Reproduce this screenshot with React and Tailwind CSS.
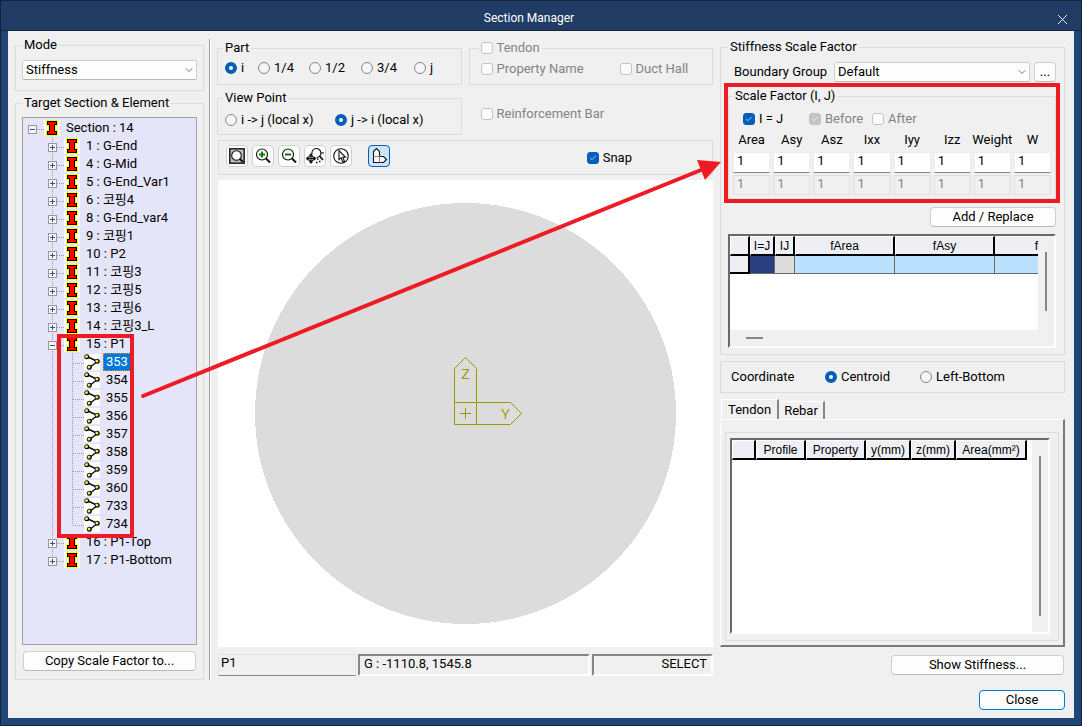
import { ChevronDown, Check, X } from 'lucide-react'

const sections = [
  '1 : G-End',
  '4 : G-Mid',
  '5 : G-End_Var1',
  '6 : 코핑4',
  '8 : G-End_var4',
  '9 : 코핑1',
  '10 : P2',
  '11 : 코핑3',
  '12 : 코핑5',
  '13 : 코핑6',
  '14 : 코핑3_L',
  '15 : P1',
  '16 : P1-Top',
  '17 : P1-Bottom',
]

const elements = ['353', '354', '355', '356', '357', '358', '359', '360', '733', '734']

const factors = ['Area', 'Asy', 'Asz', 'Ixx', 'Iyy', 'Izz', 'Weight', 'W']

function Group({ title, className = '', children }) {
  return (
    <fieldset className={`min-w-0 border border-[#dcdcdc] ${className}`}>
      <legend className="h-4 px-0.5 leading-4">{title}</legend>
      {children}
    </fieldset>
  )
}

function Radio({ label, name, defaultChecked }) {
  return (
    <label className="flex h-4 items-center gap-1 whitespace-nowrap">
      <input
        type="radio"
        name={name}
        defaultChecked={defaultChecked}
        className="h-3 w-3 shrink-0 appearance-none rounded-full border border-[#868686] bg-[#f6f6f6] checked:border-4 checked:border-[#005fb8] checked:bg-white"
      />
      {label}
    </label>
  )
}

function Checkbox({ label, defaultChecked, disabled }) {
  return (
    <label
      className={`flex h-4 items-center gap-1 whitespace-nowrap ${disabled ? 'text-[#838383]' : ''}`}
    >
      <span className="relative h-3 w-3 shrink-0">
        <input
          type="checkbox"
          defaultChecked={defaultChecked}
          disabled={disabled}
          className="block h-3 w-3 appearance-none rounded-[3px] border border-[#c3c3c3] bg-[#fbfbfb] checked:border-[#005fb8] checked:bg-[#005fb8] checked:disabled:border-[#c3c3c3] checked:disabled:bg-[#c3c3c3]"
        />
        {defaultChecked && (
          <Check size={8} className="pointer-events-none absolute top-0.5 left-0.5 text-white" />
        )}
      </span>
      {label}
    </label>
  )
}

function Select({ id, label, value, className = '' }) {
  return (
    <div className={`relative ${className}`}>
      <select
        id={id}
        aria-label={label}
        className="block h-5 w-full appearance-none rounded-xs border border-[#cfcfcf] border-b-[#b5b5b5] bg-[#fdfdfd] px-[3px] leading-4"
      >
        <option>{value}</option>
      </select>
      <ChevronDown
        size={12}
        strokeWidth={2}
        className="pointer-events-none absolute top-1 right-0.5 text-[#777]"
      />
    </div>
  )
}

function Button({ className = '', children }) {
  return (
    <button
      type="button"
      className={`h-5 rounded border border-[#cfcfcf] border-b-[#b8b8b8] bg-[#fdfdfd] text-center leading-4 ${className}`}
    >
      {children}
    </button>
  )
}

function Guide({ top = true, bottom = true, branch = true }) {
  return (
    <svg width="16" height="18" className="shrink-0" shapeRendering="crispEdges" aria-hidden="true">
      <g stroke="#9a9aa5" strokeDasharray="1 1">
        {top && <path d="M4.5 0V10" />}
        {bottom && <path d="M4.5 10V18" />}
        {branch && <path d="M5 10.5H16" />}
      </g>
    </svg>
  )
}

function Expander({ open, top = true, bottom = true }) {
  return (
    <button type="button" aria-label={open ? 'Collapse' : 'Expand'} className="relative shrink-0">
      <Guide top={top} bottom={bottom} />
      <svg width="9" height="9" className="absolute top-1.5 left-0" shapeRendering="crispEdges">
        <rect x=".5" y=".5" width="8" height="8" rx="1" fill="#f5f5f8" stroke="#979797" />
        <path d={open ? 'M2 4.5H7' : 'M2 4.5H7M4.5 2V7'} stroke="#34509c" />
      </svg>
    </button>
  )
}

function SectionIcon() {
  return (
    <svg width="16" height="16" className="shrink-0" shapeRendering="crispEdges" aria-hidden="true">
      <rect width="16" height="16" fill="#fff" />
      <path d="M2 0H14V6H12V10H14V16H2V10H4V6H2Z" fill="#ff0" />
      <path d="M3 1H13V5H11V11H13V15H3V11H5V5H3Z" fill="#000" />
      <path d="M4 2H12V4H10V12H12V14H4V12H6V4H4Z" fill="#f00" />
    </svg>
  )
}

function ElementIcon() {
  return (
    <svg width="16" height="16" className="shrink-0" aria-hidden="true">
      <rect width="16" height="16" fill="#fff" />
      <path d="M3 2.5L13.5 7.5L5.5 13.5" fill="none" stroke="#111" strokeWidth="1.5" />
      <g fill="#000">
        <circle cx="2.8" cy="2.8" r="2.5" />
        <circle cx="13.2" cy="7.3" r="2.5" />
        <circle cx="5.3" cy="13.2" r="2.5" />
      </g>
      <g fill="#e8e850">
        <circle cx="2.5" cy="2.5" r="1.5" />
        <circle cx="12.9" cy="7" r="1.5" />
        <circle cx="5" cy="12.9" r="1.5" />
      </g>
    </svg>
  )
}

function Tree() {
  return (
    <div className="relative flex-1 border border-[#a0a0a0] bg-[#e5e5fa] pt-px">
      <ul>
        <li className="flex h-[18px] items-center pl-[5px]">
          <Expander open top={false} bottom={false} />
          <SectionIcon />
          <span className="ml-0.5 px-1">Section : 14</span>
        </li>
        {sections.map((name, i) => (
          <li key={name}>
            <div className="flex h-[18px] items-center pl-[25px]">
              <Expander open={name === '15 : P1'} bottom={i < sections.length - 1} />
              <SectionIcon />
              <span className="ml-0.5 px-1">{name}</span>
            </div>
            {name === '15 : P1' && (
              <ul>
                {elements.map((id, j) => (
                  <li key={id} className="flex h-[18px] items-center pl-[25px]">
                    <Guide branch={false} />
                    <span className="w-1 shrink-0" />
                    <Guide bottom={j < elements.length - 1} />
                    <ElementIcon />
                    <span
                      className={`ml-[3px] border border-dotted px-0.5 leading-4 ${
                        j === 0 ? 'border-[#ff8728] bg-[#0078d7] text-white' : 'border-transparent'
                      }`}
                    >
                      {id}
                    </span>
                  </li>
                ))}
              </ul>
            )}
          </li>
        ))}
      </ul>
      <div className="pointer-events-none absolute top-[216px] left-[34px] h-[204px] w-[77px] border-4 border-[#ed1c24]" />
    </div>
  )
}

function ToolButton({ label, active, children }) {
  return (
    <button
      type="button"
      aria-label={label}
      className={`flex h-[22px] w-[22px] items-center justify-center rounded border ${
        active ? 'ml-3 border-[#005fb8] bg-[#cce4f7]' : 'border-[#d0d0d0] bg-[#fdfdfd]'
      }`}
    >
      <svg
        width="18"
        height="18"
        viewBox="0 0 18 18"
        fill="none"
        stroke="#111"
        strokeWidth="1.1"
        className="shrink-0"
      >
        {children}
      </svg>
    </button>
  )
}

function Toolbar() {
  return (
    <div className="ml-px flex h-[35px] items-center border border-[#dcdcdc] pl-[7px]">
      <div className="flex gap-1 self-start pt-1">
        <ToolButton label="Zoom fit">
          <rect x="1.8" y="1.8" width="14.4" height="14.4" fill="#bdbdbd" strokeWidth="1.4" />
          <circle cx="8.5" cy="8.5" r="4.8" fill="#fff" />
          <path d="M12 12L15 15" strokeWidth="2" />
        </ToolButton>
        <ToolButton label="Zoom in">
          <circle cx="8" cy="7.5" r="5.5" />
          <path d="M12 11.5L16 15.5" strokeWidth="2" />
          <path d="M5 7.5H11M8 4.5V10.5" stroke="#008000" strokeWidth="2" />
        </ToolButton>
        <ToolButton label="Zoom out">
          <circle cx="8" cy="7.5" r="5.5" />
          <path d="M12 11.5L16 15.5" strokeWidth="2" />
          <path d="M5 7.5H11" stroke="#008000" strokeWidth="2" />
        </ToolButton>
        <ToolButton label="Dynamic zoom">
          <path d="M6 7A4.5 4.5 0 1 1 10.5 10.5" />
          <path d="M13.5 9L17 13" strokeWidth="1.8" />
          <path d="M15 6H18" />
          <path d="M0.5 11.5H9.5M5 7V16M3.5 8.5L5 7L6.5 8.5M3.5 14.5L5 16L6.5 14.5M2 10L.5 11.5L2 13M8 10L9.5 11.5L8 13" />
          <circle cx="5" cy="11.5" r="2.5" />
          <path d="M11 12H12.5M13 14.5H14.5M10 15.5H11.5" strokeWidth="1.5" />
        </ToolButton>
        <ToolButton label="Pointer">
          <circle cx="9" cy="9" r="7.3" />
          <path d="M7 3.5V12.5L9 10.8L11 15.3L12.6 14.5L10.7 10.3H13.5Z" fill="#fff" />
        </ToolButton>
        <ToolButton label="Show axis" active>
          <path d="M3.5 15.5V4.5L6.5 1.5L9.5 4.5V9.5H13.5L16.5 12.5L13.5 15.5Z" fill="#fff" />
          <path d="M3.5 9.5H9.5V15.5" stroke="#888" />
        </ToolButton>
      </div>
      <div className="mr-20 ml-auto">
        <Checkbox label="Snap" defaultChecked />
      </div>
    </div>
  )
}

function SectionView() {
  return (
    <div className="mt-[5px] ml-px flex flex-1 items-center justify-center bg-white">
      <svg width="495" height="467" viewBox="0 0 495 467" role="img" aria-label="Section view">
        <circle cx="247.5" cy="233.5" r="210.5" fill="#dcdcdc" shapeRendering="crispEdges" />
        <g fill="none" stroke="#9a9a00">
          <path d="M236.5 244.5V188.5L247.5 177.5L258.5 188.5V244.5" />
          <path d="M236.5 222.5H292.5L303.5 233.5L292.5 244.5H236.5" />
        </g>
        <path d="M242 233.5H253M247.5 228V239" stroke="#9a9a00" />
        <g fill="#9a9a00" fontSize="15" textAnchor="middle" fontFamily="Open Sans, sans-serif">
          <text x="247.5" y="199">Z</text>
          <text x="287.5" y="239">Y</text>
        </g>
      </svg>
    </div>
  )
}

function FactorGroup() {
  return (
    <div className="relative mt-1.5">
      <Group title="Scale Factor (I, J)" className="px-1 pb-[3px]">
        <div className="mt-[7px] ml-2.5 grid grid-cols-[66px_63px_auto]">
          <Checkbox label="I = J" defaultChecked />
          <Checkbox label="Before" defaultChecked disabled />
          <Checkbox label="After" disabled />
        </div>
        <div className="mt-[3px] grid grid-cols-8 gap-x-[3px] text-center">
          {factors.map((name) => (
            <div key={name} className="flex min-w-0 flex-col items-center">
              <label htmlFor={`i-${name}`} className="h-5 whitespace-nowrap leading-5">
                {name}
              </label>
              <input
                id={`i-${name}`}
                defaultValue="1"
                className="mt-0.5 h-[21px] w-full border border-[#ececec] border-b-[#868686] bg-white px-[3px] pb-1 leading-4"
              />
              <input
                aria-label={`${name} J`}
                defaultValue="1"
                disabled
                className="mt-0.5 h-5 w-full border border-[#e0e0e0] bg-[#f0f0f0] px-[3px] pb-1 leading-4 text-[#838383]"
              />
            </div>
          ))}
        </div>
      </Group>
      <div className="pointer-events-none absolute -top-[5px] -right-1 -bottom-1 -left-1 border-4 border-[#ed1c24]" />
    </div>
  )
}

const headCell =
  'h-5 overflow-hidden border-t border-l border-r-2 border-b-2 border-t-white border-l-white border-r-black border-b-black bg-[#eeeff5] p-0 text-center font-normal whitespace-nowrap'

function FactorTable() {
  return (
    <div className="mt-[7px] flex h-[114px] flex-col border-2 border-t-[#696969] border-r-white border-b-white border-l-[#696969] font-['Liberation_Sans'] text-xs">
      <div className="flex min-h-0 flex-1">
        <div className="min-w-0 flex-1 bg-white">
          <table className="w-full table-fixed border-separate border-spacing-0">
            <thead>
              <tr>
                <th className={`w-5 ${headCell}`} />
                <th className={`w-[25px] ${headCell}`}>I=J</th>
                <th className={`w-5 ${headCell}`}>IJ</th>
                <th className={`w-[100px] ${headCell}`}>fArea</th>
                <th className={`w-[100px] ${headCell}`}>fAsy</th>
                <th className="border-t border-b-2 border-t-white border-b-black bg-[#eeeff5] p-0 text-right font-normal">
                  f
                </th>
              </tr>
            </thead>
            <tbody>
              <tr>
                <td className="h-[18px] border-r-2 border-b-2 border-black bg-[#eeeff5]" />
                <td className="border-r border-b border-[#696969] bg-[#2a3f7f]" />
                <td className="border-r border-b border-[#696969] bg-[#dcdcdc]" />
                <td className="border-r border-b border-[#696969] bg-[#bbe1ff]" />
                <td className="border-r border-b border-[#696969] bg-[#bbe1ff]" />
                <td className="border-b border-[#696969] bg-[#bbe1ff]" />
              </tr>
            </tbody>
          </table>
        </div>
        <div className="flex w-4 justify-center">
          <div className="mt-4 h-[59px] w-0.5 bg-[#868686]" />
        </div>
      </div>
      <div className="flex h-4 items-center pl-4">
        <div className="h-0.5 w-[17px] bg-[#868686]" />
      </div>
    </div>
  )
}

function TendonPanel() {
  return (
    <div className="mt-1.5 flex min-h-0 flex-1 flex-col">
      <div role="tablist" className="flex items-end pl-px">
        <button
          type="button"
          role="tab"
          aria-selected="true"
          className="-mb-px h-[21px] border-t border-r-2 border-l border-t-white border-r-[#868686] border-l-white bg-[#f0f0f0] px-1.5 leading-4"
        >
          Tendon
        </button>
        <button
          type="button"
          role="tab"
          aria-selected="false"
          className="h-[18px] border-t border-r-2 border-t-white border-r-[#868686] px-[5px] leading-4"
        >
          Rebar
        </button>
      </div>
      <div className="flex min-h-0 flex-1 flex-col border border-r-2 border-b-2 border-t-white border-r-[#7a7a7a] border-b-[#7a7a7a] border-l-white px-1 pt-3 pb-1">
        <div className="flex min-h-0 flex-1 border border-[#dcdcdc] pt-[5px] pr-2 pb-1.5 pl-1">
          <div className="flex flex-1 border-2 border-t-[#696969] border-r-white border-b-white border-l-[#696969] font-['Liberation_Sans'] text-xs">
            <div className="flex-1 bg-white">
              <table className="w-[295px] table-fixed border-separate border-spacing-0">
                <thead>
                  <tr>
                    <th className={`w-6 ${headCell}`} />
                    <th className={`w-[50px] ${headCell}`}>Profile</th>
                    <th className={`w-[60px] ${headCell}`}>Property</th>
                    <th className={`w-[45px] ${headCell}`}>y(mm)</th>
                    <th className={`w-[45px] ${headCell}`}>z(mm)</th>
                    <th className={`w-[71px] ${headCell}`}>Area(mm²)</th>
                  </tr>
                </thead>
              </table>
            </div>
            <div className="flex w-4 justify-center py-4">
              <div className="w-0.5 bg-[#868686]" />
            </div>
          </div>
        </div>
      </div>
    </div>
  )
}

export default function App() {
  return (
    <div className="relative flex min-h-screen flex-col border border-[#14233b] bg-[#204678] font-['Roboto','Noto_Sans_CJK_KR',sans-serif] text-[13px] leading-4 text-black">
      <header className="relative flex h-[30px] items-center justify-center border-b border-[#14233b] bg-[#203c64] pr-6">
        <h1 className="pt-1 text-xs text-white">Section Manager</h1>
        <button type="button" aria-label="Close window" className="absolute top-2.5 right-2.5 text-white">
          <X size={17} strokeWidth={1.3} />
        </button>
      </header>

      <div className="mx-[7px] mb-[7px] flex flex-1 flex-col bg-[#f0f0f0] pr-[9px] pl-[7px]">
        <main className="flex flex-1 pt-1.5">
          <aside className="flex w-[189px] shrink-0 flex-col gap-1">
            <Group title="Mode" className="px-1.5 pt-[7px] pb-2.5">
              <Select label="Mode" value="Stiffness" />
            </Group>
            <Group title="Target Section & Element" className="flex flex-1 flex-col px-1.5 pt-1.5 pb-2">
              <Tree />
              <Button className="mx-px mt-1.5">Copy Scale Factor to...</Button>
            </Group>
          </aside>

          <div className="mt-0.5 mr-1.5 ml-[5px] w-0.5 border-l border-[#a0a0a0] bg-white" />

          <section className="flex min-w-0 flex-1 flex-col pt-[3px] pb-1">
            <div className="grid grid-cols-2 gap-x-[7px] gap-y-[5px]">
              <Group title="Part" className="h-[45px] px-[5px]">
                <div className="mt-1 ml-0.5 grid grid-cols-[33px_51px_52px_53px_auto]">
                  <Radio name="part" label="i" defaultChecked />
                  <Radio name="part" label="1/4" />
                  <Radio name="part" label="1/2" />
                  <Radio name="part" label="3/4" />
                  <Radio name="part" label="j" />
                </div>
              </Group>
              <Group
                title={<Checkbox label="Tendon" disabled />}
                className="h-[45px] px-[9px]"
              >
                <div className="mt-[5px] ml-0.5 flex gap-9">
                  <Checkbox label="Property Name" disabled />
                  <Checkbox label="Duct Hall" disabled />
                </div>
              </Group>
              <Group title="View Point" className="h-[45px] px-[5px]">
                <div className="mt-1.5 ml-0.5 grid grid-cols-[110px_auto]">
                  <Radio name="view" label="i -> j (local x)" />
                  <Radio name="view" label="j -> i (local x)" defaultChecked />
                </div>
              </Group>
              <div className="flex items-center pt-0.5 pl-3">
                <Checkbox label="Reinforcement Bar" disabled />
              </div>
            </div>
            <div className="mt-[5px]">
              <Toolbar />
            </div>
            <SectionView />
            <footer className="mt-[7px] ml-px flex h-[22px] gap-0.5">
              <output className="w-[138px] border border-[#e3e3e3] border-b-[#868686] px-0.5 leading-4">P1</output>
              <output className="flex-1 border-2 border-t-[#868686] border-r-white border-b-white border-l-[#868686] px-1 leading-4">
                G : -1110.8, 1545.8
              </output>
              <output className="w-[121px] border-2 border-t-[#868686] border-r-white border-b-white border-l-[#868686] px-1 text-right leading-4">
                SELECT
              </output>
            </footer>
          </section>

          <section className="ml-[7px] flex w-[345px] shrink-0 flex-col pt-0.5 pb-[5px]">
            <Group title="Stiffness Scale Factor" className="pr-2 pb-1.5 pl-[7px]">
              <div className="mt-[7px] flex items-center">
                <label htmlFor="boundary" className="w-[106px] pl-1.5">
                  Boundary Group
                </label>
                <Select id="boundary" value="Default" className="flex-1" />
                <Button className="ml-1 w-[22px]">...</Button>
              </div>
              <FactorGroup />
              <div className="mt-2 flex justify-end">
                <Button className="w-[126px]">Add / Replace</Button>
              </div>
              <FactorTable />
            </Group>

            <div role="radiogroup" className="mt-1.5 flex h-8 shrink-0 items-center border border-[#dcdcdc] pl-2.5">
              <span className="w-[94px]">Coordinate</span>
              <div className="grid grid-cols-[95px_auto]">
                <Radio name="coordinate" label="Centroid" defaultChecked />
                <Radio name="coordinate" label="Left-Bottom" />
              </div>
            </div>

            <TendonPanel />
            <Button className="mt-2 mr-px w-[173px] shrink-0 self-end">Show Stiffness...</Button>
          </section>
        </main>

        <div className="flex justify-end pt-2.5 pb-2">
          <button
            type="button"
            className="h-5 w-[86px] rounded border border-[#0078d4] bg-[#fdfdfd] leading-4"
          >
            Close
          </button>
        </div>
      </div>

      <svg
        width="600"
        height="260"
        className="pointer-events-none absolute top-[149px] left-[129px]"
        aria-hidden="true"
      >
        <path d="M13 246L571 20" stroke="#ed1c24" strokeWidth="4" strokeLinecap="round" />
        <path d="M591 12L567 10L575 30Z" fill="#ed1c24" />
      </svg>
    </div>
  )
}
